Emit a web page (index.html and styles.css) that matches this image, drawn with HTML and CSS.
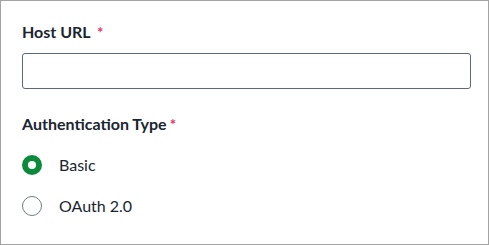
FILE: index.html
```html
<!DOCTYPE html>
<html lang="en">
<head>
    <meta charset="UTF-8">
    <meta name="viewport" content="width=device-width, initial-scale=1.0">
    <title>Connection</title>
    <link rel="stylesheet" href="styles.css">
</head>
<body>
    <form class="panel">
        <!-- Host URL field -->
        <div class="field">
            <label class="label" for="hostUrl">Host URL <span class="req">*</span></label>
            <input class="text-input" type="text" id="hostUrl">
        </div>

        <!-- Authentication type -->
        <div class="field">
            <div class="label">Authentication Type<span class="req">*</span></div>
            <div class="options">
                <label class="option">
                    <input type="radio" name="auth" value="basic" checked>
                    <span class="radio"></span>
                    Basic
                </label>
                <label class="option">
                    <input type="radio" name="auth" value="oauth">
                    <span class="radio"></span>
                    OAuth 2.0
                </label>
            </div>
        </div>
    </form>
</body>
</html>
```

FILE: styles.css
```css
html, body {
    margin: 0;
    padding: 0;
}

body {
    font-family: 'Lato', 'Liberation Sans', sans-serif;
    color: #1a2530;
    background-color: #ffffff;
}

.panel {
    box-sizing: border-box;
    width: 489px;
    height: 245px;
    border: 1px solid #a3a3a3;
    padding: 21px 17px 0 21px;
}

.field {
    margin-bottom: 25px;
}

.label {
    display: block;
    font-size: 16px;
    line-height: 20px;
    font-weight: bold;
    margin-bottom: 11px;
}

.req {
    color: #e5305f;
    font-size: 15px;
    font-weight: bold;
    margin-left: 3px;
}

.text-input {
    box-sizing: border-box;
    display: block;
    width: 100%;
    height: 36px;
    border: 1px solid #5b6a76;
    border-radius: 3px;
    padding: 0 10px;
    font-family: inherit;
    font-size: 16px;
    outline: none;
}

.options {
    display: flex;
    flex-direction: column;
    gap: 21px;
    padding-top: 10px;
}

.option {
    display: flex;
    align-items: center;
    gap: 17px;
    font-size: 16px;
    line-height: 20px;
    cursor: pointer;
}

.option input {
    display: none;
}

.radio {
    box-sizing: border-box;
    width: 20px;
    height: 20px;
    border-radius: 50%;
    border: 1.5px solid #6f7d88;
    background-color: #ffffff;
}

.option input:checked + .radio {
    border: 6px solid #0b8a3c;
}
```
